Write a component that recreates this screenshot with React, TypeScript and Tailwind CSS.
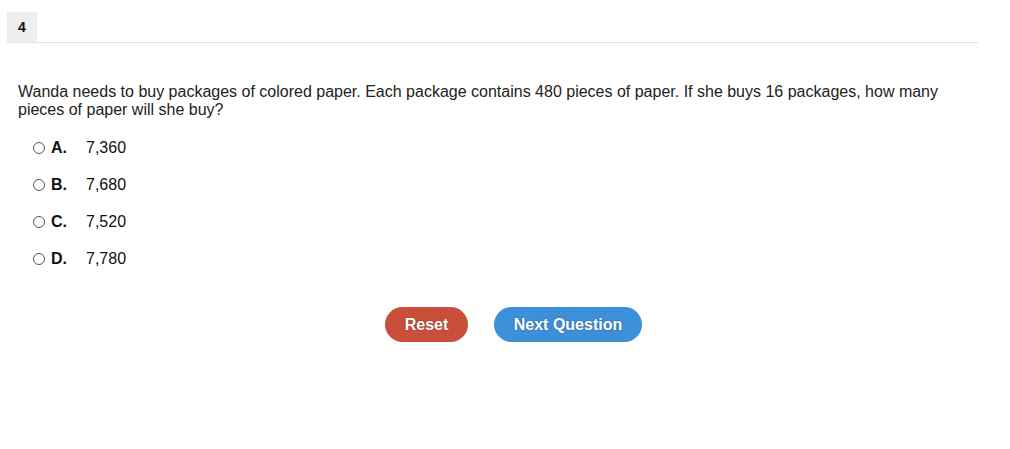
import React, { useState } from "react";

const options = [
  { key: "A", value: "7,360" },
  { key: "B", value: "7,680" },
  { key: "C", value: "7,520" },
  { key: "D", value: "7,780" },
];

export default function App() {
  const [picked, setPicked] = useState<string | null>(null);

  return (
    <div className="w-[1010px] h-[449px] bg-white font-['Liberation_Sans',Arial,sans-serif] text-[#111]">
      <div className="pt-3 pl-[7px] w-[978px]">
        <div className="border-b border-[#e2e2e2] h-[31px]">
          <div className="w-[30px] h-[30px] bg-[#eeeeee] flex items-center pl-[11px] text-[14px] font-bold">
            4
          </div>
        </div>
      </div>

      <p className="mt-[40px] ml-[18px] w-[940px] text-[16px] leading-[18px] text-[#222]">
        Wanda needs to buy packages of colored paper. Each package contains 480 pieces of paper. If she buys 16 packages, how many pieces of paper will she buy?
      </p>

      <div className="mt-[20px] ml-[33px] flex flex-col gap-[19px]">
        {options.map((o) => (
          <label key={o.key} className="flex items-center h-[18px] text-[16px] cursor-pointer">
            <span
              onClick={() => setPicked(o.key)}
              className="w-[12px] h-[12px] rounded-full border border-[#555] bg-white flex items-center justify-center"
            >
              {picked === o.key && <span className="w-[6px] h-[6px] rounded-full bg-[#333]" />}
            </span>
            <span className="ml-[6px] w-[35px] font-bold">{o.key}.</span>
            <span>{o.value}</span>
          </label>
        ))}
      </div>

      <div className="mt-[39px] flex justify-center gap-[26px] pl-[17px]">
        <button
          type="button"
          onClick={() => setPicked(null)}
          className="w-[83px] h-[35px] rounded-full bg-[#c94f3b] text-white font-bold text-[16px] [text-shadow:0_0_2px_rgba(0,0,0,0.35)]"
        >
          Reset
        </button>
        <button
          type="button"
          className="w-[148px] h-[35px] rounded-full bg-[#3e8fd9] text-white font-bold text-[16px] [text-shadow:0_0_2px_rgba(0,0,0,0.35)]"
        >
          Next Question
        </button>
      </div>
    </div>
  );
}
